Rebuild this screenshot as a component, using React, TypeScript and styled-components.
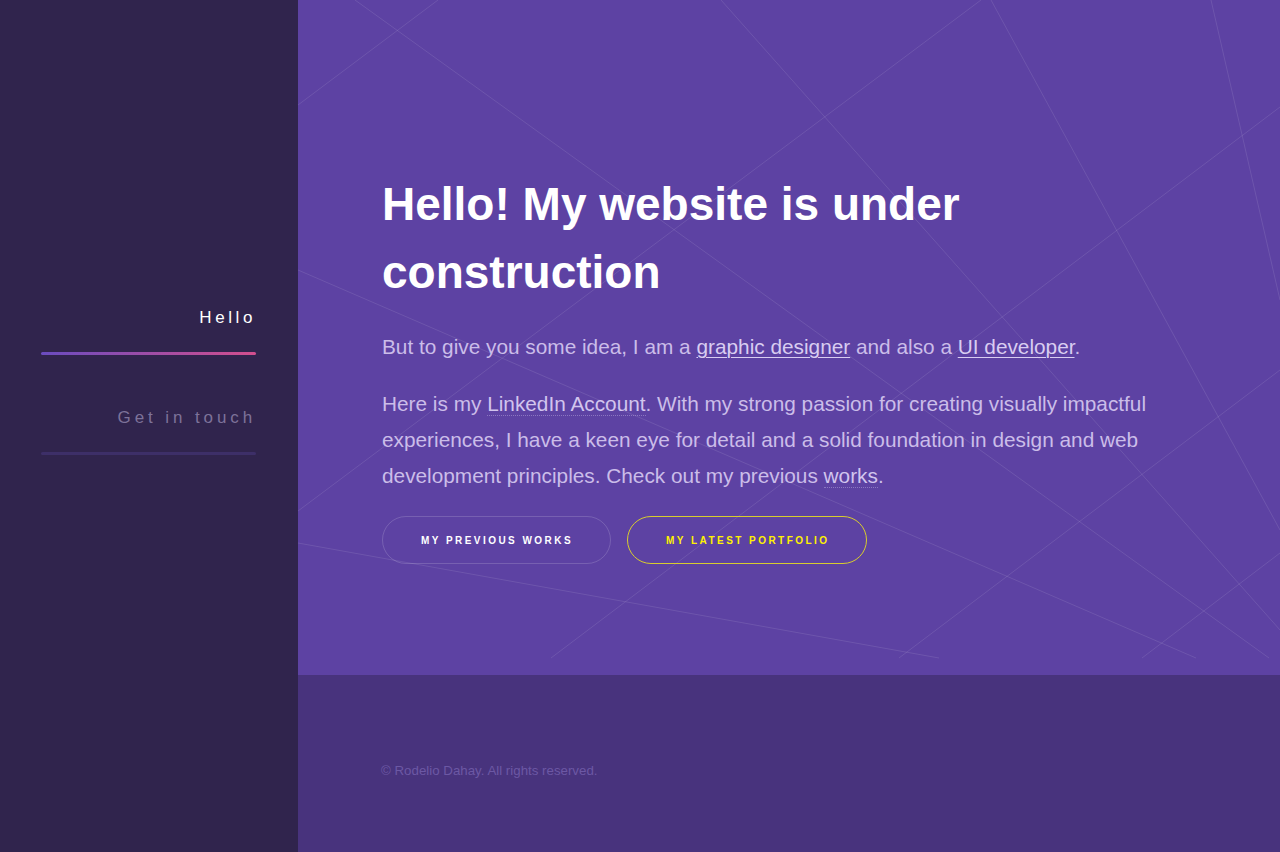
import React from "react";
import styled, { createGlobalStyle } from "styled-components";

const GlobalStyle = createGlobalStyle`
  html, body {
    margin: 0;
    padding: 0;
    height: 100%;
  }
  body {
    font-family: "Liberation Sans", Arial, sans-serif;
    background: #30244d;
  }
  #root {
    height: 100%;
  }
`;

// background lines, in hero-local coordinates
const lines: [number, number, number, number][] = [
  [57, 0, 971, 658],
  [0, 105, 140, 0],
  [423, 0, 982, 630],
  [683, 0, 0, 511],
  [693, 0, 982, 530],
  [913, 0, 982, 300],
  [982, 107, 253, 658],
  [982, 370, 601, 658],
  [982, 553, 844, 658],
  [0, 270, 898, 658],
  [0, 543, 641, 658],
];

const navItems = [
  { label: "Hello", active: true },
  { label: "Get in touch", active: false },
];

const Layout = styled.div`
  display: flex;
  width: 100%;
  min-height: 852px;
  height: 100%;
`;

const Sidebar = styled.nav`
  width: 298px;
  flex-shrink: 0;
  background: #30244d;
  display: flex;
  flex-direction: column;
  padding: 307px 42px 0 41px;
  box-sizing: border-box;
  gap: 52px;
`;

const NavItem = styled.a<{ $active: boolean }>`
  display: flex;
  flex-direction: column;
  align-items: flex-end;
  gap: 23px;
  text-decoration: none;
  cursor: pointer;
  color: ${(p) => (p.$active ? "#ffffff" : "#7d7299")};
  font-size: 17px;
  letter-spacing: ${(p) => (p.$active ? "3.6px" : "3.9px")};
  line-height: 22px;
`;

const NavBar = styled.span<{ $active: boolean }>`
  display: block;
  width: 100%;
  height: 3px;
  border-radius: 2px;
  background: ${(p) =>
    p.$active ? "linear-gradient(90deg, #6a4cc0 0%, #d24f8e 100%)" : "#3d2f68"};
`;

const Main = styled.main`
  flex: 1;
  display: flex;
  flex-direction: column;
  background: #48337d;
`;

const Hero = styled.section`
  position: relative;
  height: 675px;
  background: #5d42a3;
  overflow: hidden;
  padding: 170px 84px 0 84px;
  box-sizing: border-box;
`;

const Lines = styled.svg`
  position: absolute;
  left: 0;
  top: 0;
  width: 982px;
  height: 659px;
  pointer-events: none;
`;

const Content = styled.div`
  position: relative;
  max-width: 800px;
`;

const Title = styled.h1`
  margin: 0;
  color: #ffffff;
  font-size: 46px;
  font-weight: 700;
  line-height: 68px;
  max-width: 760px;
`;

const Text = styled.p`
  margin: 23px 0 0;
  color: #cbbde9;
  font-size: 20.8px;
  line-height: 36px;
  & + & {
    margin-top: 21px;
  }
`;

const Link = styled.a`
  color: #d9cdf1;
  text-decoration: underline;
  text-underline-offset: 3px;
  text-decoration-thickness: 1px;
`;

const SoftLink = styled.a`
  color: #d2c5ee;
  text-decoration: none;
  border-bottom: 1px dotted rgba(210, 197, 238, 0.4);
`;

const Actions = styled.div`
  display: flex;
  gap: 16px;
  margin-top: 22px;
`;

const Button = styled.a<{ $accent?: boolean }>`
  display: inline-flex;
  align-items: center;
  justify-content: center;
  height: 48px;
  padding: 0 37px 0 38px;
  box-sizing: border-box;
  border-radius: 24px;
  border: 1px solid
    ${(p) => (p.$accent ? "#d8cc2e" : "rgba(255, 255, 255, 0.16)")};
  color: ${(p) => (p.$accent ? "#fff200" : "#ffffff")};
  font-size: 10px;
  font-weight: 700;
  letter-spacing: 2.45px;
  text-transform: uppercase;
  cursor: pointer;
`;

const Footer = styled.footer`
  padding: 88px 83px 0;
  color: #6c58a4;
  font-size: 13.3px;
  line-height: 16px;
`;

export default function App() {
  return (
    <>
      <GlobalStyle />
      <Layout>
        <Sidebar>
          {navItems.map((item) => (
            <NavItem key={item.label} $active={item.active}>
              {item.label}
              <NavBar $active={item.active} />
            </NavItem>
          ))}
        </Sidebar>
        <Main>
          <Hero>
            <Lines viewBox="0 0 982 659">
              {lines.map(([x1, y1, x2, y2], i) => (
                <line
                  key={i}
                  x1={x1}
                  y1={y1}
                  x2={x2}
                  y2={y2}
                  stroke="rgba(255,255,255,0.1)"
                  strokeWidth="1"
                />
              ))}
            </Lines>
            <Content>
              <Title>Hello! My website is under construction</Title>
              <Text>
                But to give you some idea, I am a <Link>graphic designer</Link> and
                also a <Link>UI developer</Link>.
              </Text>
              <Text>
                Here is my <SoftLink>LinkedIn Account</SoftLink>. With my strong
                passion for creating visually impactful experiences, I have a keen
                eye for detail and a solid foundation in design and web development
                principles. Check out my previous <SoftLink>works</SoftLink>.
              </Text>
              <Actions>
                <Button>My previous works</Button>
                <Button $accent>My latest portfolio</Button>
              </Actions>
            </Content>
          </Hero>
          <Footer>© Rodelio Dahay. All rights reserved.</Footer>
        </Main>
      </Layout>
    </>
  );
}
